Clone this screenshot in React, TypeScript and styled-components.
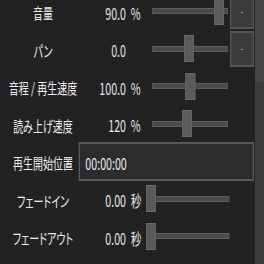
import styled, { createGlobalStyle } from 'styled-components';

const GlobalStyle = createGlobalStyle`
  html, body {
    margin: 0;
    padding: 0;
    background: #222222;
    overflow: hidden;
  }
`;

const Page = styled.div`
  width: 264px;
  height: 264px;
  display: flex;
  background: #222222;
  overflow: hidden;
  font-family: 'Noto Sans CJK JP', 'Noto Sans', sans-serif;
`;

const Viewport = styled.div`
  width: 255px;
  height: 264px;
  overflow: hidden;
`;

// the window is drawn horizontally squeezed, so lay it out wide and scale it
const Sheet = styled.div`
  width: 382.5px;
  margin-top: -7.5px;
  transform: scaleX(0.6667);
  transform-origin: 0 0;
  display: flex;
  flex-direction: column;
`;

const Row = styled.div`
  height: 37.5px;
  display: flex;
  align-items: center;
  flex-shrink: 0;
`;

const Label = styled.div`
  width: 107px;
  margin-left: 11px;
  flex-shrink: 0;
  text-align: center;
  white-space: nowrap;
  color: #ececec;
  font-size: 15px;
  font-feature-settings: 'palt';
  padding-top: 3px;
`;

const Value = styled.div`
  width: 71px;
  flex-shrink: 0;
  text-align: right;
  color: #e6e6e6;
  font-size: 16px;
  padding-top: 3px;
`;

const Unit = styled.div`
  width: 18px;
  margin-left: 7px;
  flex-shrink: 0;
  color: #e6e6e6;
  font-size: 16px;
  padding-top: 3px;
`;

const SliderBox = styled.div<{ $left: number; $width: number }>`
  position: relative;
  margin-left: ${(p) => p.$left}px;
  width: ${(p) => p.$width}px;
  height: 27px;
  flex-shrink: 0;
  display: flex;
  align-items: center;
`;

const Track = styled.div`
  width: 100%;
  height: 6px;
  box-sizing: border-box;
  background: #4a4a4a;
  border: 1px solid #5d5d5d;
`;

const Thumb = styled.div`
  position: absolute;
  top: 0;
  width: 15px;
  height: 27px;
  box-sizing: border-box;
  background: #5a5a5a;
  border: 1px solid #6a6a6a;
`;

const ButtonSlot = styled.div`
  margin-left: auto;
  margin-right: 1.5px;
  width: 36px;
  height: 36px;
  flex-shrink: 0;
`;

const ResetButton = styled.div`
  width: 100%;
  height: 100%;
  box-sizing: border-box;
  background: #3b3b3b;
  border: 2px solid #565656;
  display: flex;
  align-items: center;
  justify-content: center;
  color: #f0f0f0;
  font-size: 9px;
  line-height: 1;
`;

const TextBox = styled.div`
  flex: 1;
  height: 38.5px;
  margin-right: 1.5px;
  box-sizing: border-box;
  background: #2c2c2c;
  border: 2px solid #585858;
  padding: 3px 0 0 8px;
  display: flex;
  align-items: center;
  color: #ececec;
  font-size: 16px;
`;

const ScrollBar = styled.div`
  width: 9px;
  height: 264px;
  background: #3b3b3b;
  display: flex;
  flex-direction: column;
`;

const ScrollThumb = styled.div`
  height: 82px;
  background: #474747;
`;

type SliderProps = { left: number; width: number; pos: number };

const Slider = ({ left, width, pos }: SliderProps) => (
  <SliderBox $left={left} $width={width}>
    <Track />
    <Thumb style={{ left: pos * (width - 15) }} />
  </SliderBox>
);

type RowData = {
  label: string;
  value: string;
  unit: string;
  pos: number;
  fade?: boolean;
  reset?: boolean;
};

const rows: RowData[] = [
  { label: '音量', value: '90.0', unit: '%', pos: 0.94, reset: true },
  { label: 'パン', value: '0.0', unit: '', pos: 0.485, reset: true },
  { label: '音程 / 再生速度', value: '100.0', unit: '%', pos: 0.5 },
  { label: '読み上げ速度', value: '120', unit: '%', pos: 0.455 },
];

const fades: RowData[] = [
  { label: 'フェードイン', value: '0.00', unit: '秒', pos: 0, fade: true },
  { label: 'フェードアウト', value: '0.00', unit: '秒', pos: 0, fade: true },
];

const SliderRow = ({ row }: { row: RowData }) => (
  <Row>
    <Label>{row.label}</Label>
    <Value>{row.value}</Value>
    <Unit>{row.unit}</Unit>
    {row.fade ? (
      <Slider left={5} width={124.5} pos={row.pos} />
    ) : (
      <Slider left={14} width={114} pos={row.pos} />
    )}
    {row.reset && (
      <ButtonSlot>
        <ResetButton>-</ResetButton>
      </ButtonSlot>
    )}
  </Row>
);

export default function App() {
  return (
    <>
      <GlobalStyle />
      <Page>
        <Viewport>
          <Sheet>
            {rows.map((r) => (
              <SliderRow key={r.label} row={r} />
            ))}
            <Row>
              <Label>再生開始位置</Label>
              <TextBox>00:00:00</TextBox>
            </Row>
            {fades.map((r) => (
              <SliderRow key={r.label} row={r} />
            ))}
          </Sheet>
        </Viewport>
        <ScrollBar>
          <ScrollThumb />
        </ScrollBar>
      </Page>
    </>
  );
}
